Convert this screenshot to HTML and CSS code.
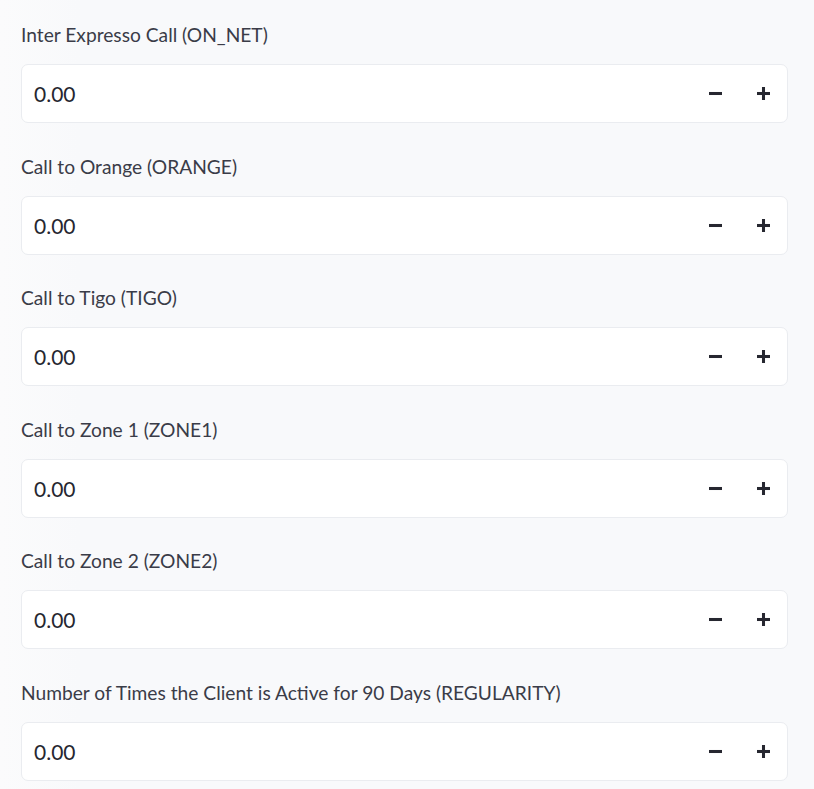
FILE: index.html
```html
<!DOCTYPE html>
<html>
<head>
<meta charset="utf-8">
<link rel="stylesheet" href="styles.css">
</head>
<body>
<div class="panel">
  <div class="field">
    <label class="label">Inter Expresso Call (ON_NET)</label>
    <div class="input"><span class="value">0.00</span><div class="steps"><span class="btn"><svg viewBox="0 0 12 12"><rect x="0" y="4.6" width="12" height="2.8"/></svg></span><span class="btn"><svg viewBox="0 0 12 12"><rect x="0" y="4.6" width="12" height="2.8"/><rect x="4.6" y="0" width="2.8" height="12"/></svg></span></div></div>
  </div>
  <div class="field">
    <label class="label">Call to Orange (ORANGE)</label>
    <div class="input"><span class="value">0.00</span><div class="steps"><span class="btn"><svg viewBox="0 0 12 12"><rect x="0" y="4.6" width="12" height="2.8"/></svg></span><span class="btn"><svg viewBox="0 0 12 12"><rect x="0" y="4.6" width="12" height="2.8"/><rect x="4.6" y="0" width="2.8" height="12"/></svg></span></div></div>
  </div>
  <div class="field">
    <label class="label">Call to Tigo (TIGO)</label>
    <div class="input"><span class="value">0.00</span><div class="steps"><span class="btn"><svg viewBox="0 0 12 12"><rect x="0" y="4.6" width="12" height="2.8"/></svg></span><span class="btn"><svg viewBox="0 0 12 12"><rect x="0" y="4.6" width="12" height="2.8"/><rect x="4.6" y="0" width="2.8" height="12"/></svg></span></div></div>
  </div>
  <div class="field">
    <label class="label">Call to Zone 1 (ZONE1)</label>
    <div class="input"><span class="value">0.00</span><div class="steps"><span class="btn"><svg viewBox="0 0 12 12"><rect x="0" y="4.6" width="12" height="2.8"/></svg></span><span class="btn"><svg viewBox="0 0 12 12"><rect x="0" y="4.6" width="12" height="2.8"/><rect x="4.6" y="0" width="2.8" height="12"/></svg></span></div></div>
  </div>
  <div class="field">
    <label class="label">Call to Zone 2 (ZONE2)</label>
    <div class="input"><span class="value">0.00</span><div class="steps"><span class="btn"><svg viewBox="0 0 12 12"><rect x="0" y="4.6" width="12" height="2.8"/></svg></span><span class="btn"><svg viewBox="0 0 12 12"><rect x="0" y="4.6" width="12" height="2.8"/><rect x="4.6" y="0" width="2.8" height="12"/></svg></span></div></div>
  </div>
  <div class="field">
    <label class="label">Number of Times the Client is Active for 90 Days (REGULARITY)</label>
    <div class="input"><span class="value">0.00</span><div class="steps"><span class="btn"><svg viewBox="0 0 12 12"><rect x="0" y="4.6" width="12" height="2.8"/></svg></span><span class="btn"><svg viewBox="0 0 12 12"><rect x="0" y="4.6" width="12" height="2.8"/><rect x="4.6" y="0" width="2.8" height="12"/></svg></span></div></div>
  </div>
</div>
</body>
</html>
```
FILE: styles.css
```css
html, body {
  margin: 0;
  padding: 0;
  background: #f8f9fb;
  height: 100%;
}
body {
  background: linear-gradient(to right, #fbfbfc 0, #f8f9fb 80px, #f8f9fb 100%);
  font-family: "Lato", "Noto Sans", sans-serif;
  color: #31333f;
}
.panel {
  padding: 21px 26px 0 21px;
  display: flex;
  flex-direction: column;
  gap: 29.5px;
}
.field {
  display: flex;
  flex-direction: column;
  gap: 15px;
}
.label {
  font-size: 19.2px;
  line-height: 28px;
  height: 28px;
  color: #3a3c48;
  white-space: nowrap;
}
.input {
  box-sizing: border-box;
  height: 59px;
  background: #ffffff;
  border: 1px solid #eaecf0;
  border-radius: 7px;
  display: flex;
  align-items: center;
  padding-left: 12px;
}
.value {
  flex: 1;
  font-size: 21px;
  color: #262730;
}
.steps {
  display: flex;
  align-items: center;
  height: 100%;
}
.btn {
  width: 48px;
  height: 100%;
  display: flex;
  align-items: center;
  justify-content: center;
}
.btn svg {
  width: 13px;
  height: 13px;
  fill: #262730;
}
```
